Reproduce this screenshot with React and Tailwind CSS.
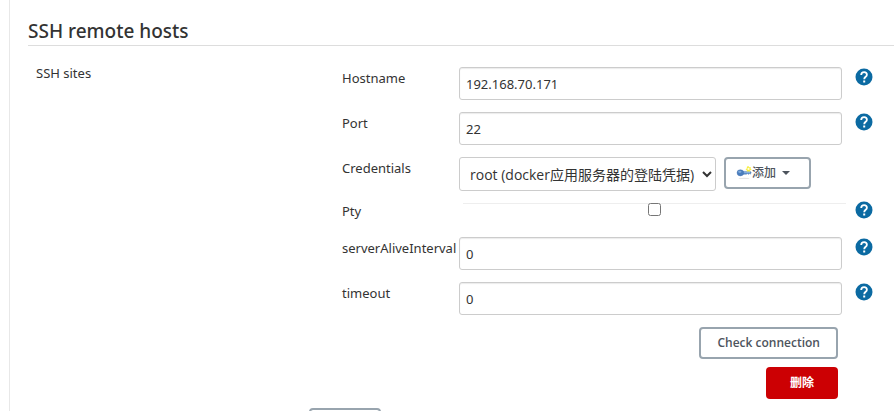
import React, { useState } from 'react'

const HelpIcon = () => (
  <svg viewBox="0 0 18 18" className="block size-[18px]" aria-hidden="true">
    <circle cx="9" cy="9" r="8.5" fill="#0b6aa2" />
    <path
      d="M6.2 7.1C6.2 5.2 7.5 4.1 9.1 4.1s2.8 1.1 2.8 2.6c0 2-2.7 2.2-2.7 4.5"
      fill="none"
      stroke="#fff"
      strokeWidth="1.8"
    />
    <rect x="8.2" y="12.5" width="2" height="2" fill="#fff" />
  </svg>
)

const KeyIcon = () => (
  <svg viewBox="0 0 16 16" className="block size-4" aria-hidden="true">
    <ellipse cx="8" cy="13.4" rx="5.5" ry="0.7" fill="#e4e4e4" />
    <path d="M7 6.4h7.4l.8 1.2-.8 1.6-1-.6-1 .8-1-.8-1 .7H7z" fill="#5b8fcb" stroke="#4a7ab5" strokeWidth="0.4" />
    <path d="M7 7.3h7" stroke="#a9c8ea" strokeWidth="0.7" />
    <ellipse cx="4.4" cy="7.8" rx="3.4" ry="3.1" fill="#4a7dbd" stroke="#4475b2" strokeWidth="0.4" />
    <ellipse cx="3.8" cy="6.8" rx="1.7" ry="1.1" fill="#7ea9da" />
    <path d="M12.3 1l.9 1.3 1.6-.2-.3 1.5 1.2 1-1.5.7-.2 1.5-1.6-.6-1.5.5-.1-1.5-1.3-.9 1.3-.9.1-1.6z" fill="#f7ee3e" />
    <circle cx="12.5" cy="3.9" r="1.1" fill="#fffde0" />
  </svg>
)

const HelpButton = ({ name }) => (
  <button type="button" aria-label={`Help for feature: ${name}`} className="block cursor-pointer">
    <HelpIcon />
  </button>
)

const Row = ({ id, label, help = true, compact = false, children }) => (
  <div className={compact ? 'flex items-start -mt-0.5' : 'flex items-start'}>
    <label htmlFor={id} className={compact ? 'w-[117px] shrink-0 leading-5' : 'w-[117px] shrink-0 pt-px leading-5'}>
      {label}
    </label>
    <div className="min-w-0 flex-1">{children}</div>
    <div className={compact ? 'w-[52px] shrink-0 pl-[13px]' : 'w-[52px] shrink-0 pt-px pl-[13px]'}>
      {help && <HelpButton name={label} />}
    </div>
  </div>
)

const TextRow = ({ id, label, value, onChange }) => (
  <Row id={id} label={label}>
    <input
      id={id}
      type="text"
      value={value}
      onChange={(e) => onChange(e.target.value)}
      className="block h-[33px] w-full rounded-[3px] border border-[#ccc] bg-white px-1.5 shadow-[inset_0_1px_1px_rgba(0,0,0,0.08)]"
    />
  </Row>
)

const App = () => {
  const [site, setSite] = useState({
    hostname: '192.168.70.171',
    port: '22',
    pty: false,
    serverAliveInterval: '0',
    timeout: '0',
  })

  const update = (key) => (value) => setSite({ ...site, [key]: value })

  return (
    <div className="pl-[9px] font-['Noto_Sans','Noto_Sans_CJK_SC',sans-serif] text-[13px] text-[#333]">
      <section className="border-l border-[#e8e8e8] pt-[17px] pl-[18px]">
        <h2 className="border-b border-[#ddd] text-[19px] leading-7 font-medium">SSH remote hosts</h2>

        <div className="flex pt-[21px]">
          <div className="w-[314px] shrink-0 pl-2 leading-3">SSH sites</div>

          <div className="min-w-0 flex-1">
            <div className="flex flex-col gap-3">
              <TextRow id="hostname" label="Hostname" value={site.hostname} onChange={update('hostname')} />
              <TextRow id="port" label="Port" value={site.port} onChange={update('port')} />

              <Row id="credentials" label="Credentials" help={false}>
                <div className="flex items-start gap-2">
                  <select
                    id="credentials"
                    className="h-[34px] w-[257px] rounded-[3px] border border-[#ccc] bg-white pr-0 pl-1.5 font-['Open_Sans','Noto_Sans_CJK_SC',sans-serif] text-[14px]"
                  >
                    <option>root (docker应用服务器的登陆凭据)</option>
                  </select>
                  <button
                    type="button"
                    className="flex h-8 w-[87px] items-center rounded border-2 border-[#98a4ae] bg-white pl-2.5 text-[12px] font-medium text-[#4d545d]"
                  >
                    <KeyIcon />
                    添加
                    <svg viewBox="0 0 8 4" className="ml-1.5 h-1 w-2" aria-hidden="true">
                      <path d="M0 0h8L4 4z" fill="#4d545d" />
                    </svg>
                  </button>
                </div>
              </Row>

              <Row id="pty" label="Pty" compact>
                <div className="mt-0.5 -mr-1 ml-1 flex h-[22px] justify-center border-t border-[#eee]">
                  <input
                    id="pty"
                    type="checkbox"
                    checked={site.pty}
                    onChange={(e) => update('pty')(e.target.checked)}
                    className="-mt-px size-[13px]"
                  />
                </div>
              </Row>

              <TextRow
                id="serverAliveInterval"
                label="serverAliveInterval"
                value={site.serverAliveInterval}
                onChange={update('serverAliveInterval')}
              />
              <TextRow id="timeout" label="timeout" value={site.timeout} onChange={update('timeout')} />
            </div>

            <div className="flex flex-col items-end gap-2 pt-3 pr-14">
              <button
                type="button"
                className="h-8 rounded border-2 border-[#98a4ae] bg-white px-4 font-['Open_Sans',sans-serif] text-[12px] font-semibold text-[#4d545d]"
              >
                Check connection
              </button>
              <button type="button" className="h-8 w-18 rounded bg-[#cc0003] text-[12px] font-bold text-white">
                删除
              </button>
            </div>
          </div>
        </div>

        {/* Add another site */}
        <div className="pt-[9px] pl-[281px]">
          <button
            type="button"
            aria-label="新增"
            className="block h-8 w-18 rounded border-2 border-[#98a4ae] bg-white"
          />
        </div>
      </section>
    </div>
  )
}

export default App
